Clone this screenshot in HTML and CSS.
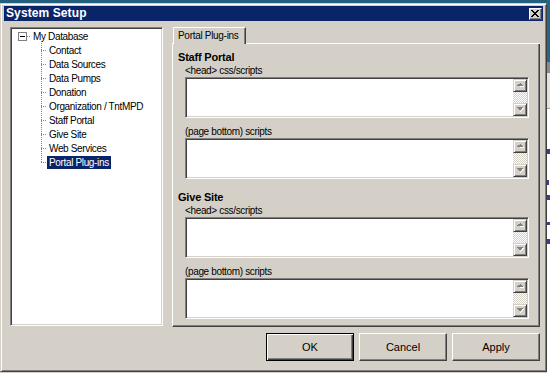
FILE: index.html
```html
<!DOCTYPE html>
<html>
<head>
<meta charset="utf-8">
<title>System Setup</title>
<link rel="stylesheet" href="styles.css">
</head>
<body>
<div class="bgtop"></div>
<div class="side">
  <div class="s-teal"></div>
  <div class="s-gray"></div>
  <div class="s-light"></div>
  <div class="s-white">
    <i class="lnk l1"></i><i class="lnk l2"></i><i class="lnk l3"></i><i class="lnk l4"></i><i class="lnk l5"></i>
  </div>
</div>
<div class="dialog">
  <div class="titlebar">
    <span class="title">System Setup</span>
    <span class="close"><svg width="8" height="7" viewBox="0 0 8 7" shape-rendering="crispEdges"><path d="M0 0h2v1h-2zM6 0h2v1h-2zM1 1h2v1h-2zM5 1h2v1h-2zM2 2h4v1h-4zM3 3h2v1h-2zM2 4h4v1h-4zM1 5h2v1h-2zM5 5h2v1h-2zM0 6h2v1h-2zM6 6h2v1h-2z" fill="#000"/></svg></span>
  </div>
  <div class="main">
    <div class="tree">
      <div class="row root"><span class="box"><i></i></span><span class="hl"></span><span class="lbl">My Database</span></div>
      <div class="row child"><span class="conn"></span><span class="lbl">Contact</span></div>
      <div class="row child"><span class="conn"></span><span class="lbl">Data Sources</span></div>
      <div class="row child"><span class="conn"></span><span class="lbl">Data Pumps</span></div>
      <div class="row child"><span class="conn"></span><span class="lbl">Donation</span></div>
      <div class="row child"><span class="conn"></span><span class="lbl">Organization / TntMPD</span></div>
      <div class="row child"><span class="conn"></span><span class="lbl">Staff Portal</span></div>
      <div class="row child"><span class="conn"></span><span class="lbl">Give Site</span></div>
      <div class="row child"><span class="conn"></span><span class="lbl">Web Services</span></div>
      <div class="row child last"><span class="conn"></span><span class="lbl sel">Portal Plug-ins</span></div>
    </div>
    <div class="tabs">
      <div class="tabstrip">
        <span class="edge"></span>
        <span class="tab">Portal Plug-ins</span>
        <span class="fill"></span>
      </div>
      <div class="panel">
        <div class="group">
          <div class="gtitle">Staff Portal</div>
          <div class="label">&lt;head&gt; css/scripts</div>
          <div class="memo"><div class="sb"><span class="sbbtn"><svg width="7" height="5" viewBox="0 0 7 5" shape-rendering="crispEdges"><path d="M4 1h1v1h1v1h1v1h-4z" fill="#fff"/><path d="M3 0h1v1h1v1h1v1h-6v-1h1v-1h2z" fill="#808080"/></svg></span><span class="track"></span><span class="sbbtn"><svg width="7" height="5" viewBox="0 0 7 5" shape-rendering="crispEdges"><path d="M1 1h6v1h-1v1h-1v1h-1v1h-1v-1h1v-1h1v-1h1z" fill="#fff"/><path d="M0 0h6v1h-1v1h-1v1h-2v-1h-1v-1h-1z" fill="#808080"/></svg></span></div></div>
          <div class="label gap">(page bottom) scripts</div>
          <div class="memo"><div class="sb"><span class="sbbtn"><svg width="7" height="5" viewBox="0 0 7 5" shape-rendering="crispEdges"><path d="M4 1h1v1h1v1h1v1h-4z" fill="#fff"/><path d="M3 0h1v1h1v1h1v1h-6v-1h1v-1h2z" fill="#808080"/></svg></span><span class="track"></span><span class="sbbtn"><svg width="7" height="5" viewBox="0 0 7 5" shape-rendering="crispEdges"><path d="M1 1h6v1h-1v1h-1v1h-1v1h-1v-1h1v-1h1v-1h1z" fill="#fff"/><path d="M0 0h6v1h-1v1h-1v1h-2v-1h-1v-1h-1z" fill="#808080"/></svg></span></div></div>
        </div>
        <div class="group second">
          <div class="gtitle">Give Site</div>
          <div class="label">&lt;head&gt; css/scripts</div>
          <div class="memo"><div class="sb"><span class="sbbtn"><svg width="7" height="5" viewBox="0 0 7 5" shape-rendering="crispEdges"><path d="M4 1h1v1h1v1h1v1h-4z" fill="#fff"/><path d="M3 0h1v1h1v1h1v1h-6v-1h1v-1h2z" fill="#808080"/></svg></span><span class="track"></span><span class="sbbtn"><svg width="7" height="5" viewBox="0 0 7 5" shape-rendering="crispEdges"><path d="M1 1h6v1h-1v1h-1v1h-1v1h-1v-1h1v-1h1v-1h1z" fill="#fff"/><path d="M0 0h6v1h-1v1h-1v1h-2v-1h-1v-1h-1z" fill="#808080"/></svg></span></div></div>
          <div class="label gap">(page bottom) scripts</div>
          <div class="memo"><div class="sb"><span class="sbbtn"><svg width="7" height="5" viewBox="0 0 7 5" shape-rendering="crispEdges"><path d="M4 1h1v1h1v1h1v1h-4z" fill="#fff"/><path d="M3 0h1v1h1v1h1v1h-6v-1h1v-1h2z" fill="#808080"/></svg></span><span class="track"></span><span class="sbbtn"><svg width="7" height="5" viewBox="0 0 7 5" shape-rendering="crispEdges"><path d="M1 1h6v1h-1v1h-1v1h-1v1h-1v-1h1v-1h1v-1h1z" fill="#fff"/><path d="M0 0h6v1h-1v1h-1v1h-2v-1h-1v-1h-1z" fill="#808080"/></svg></span></div></div>
        </div>
      </div>
    </div>
  </div>
  <div class="buttons">
    <span class="btn default">OK</span>
    <span class="btn">Cancel</span>
    <span class="btn">Apply</span>
  </div>
</div>
</body>
</html>
```
FILE: styles.css
```css
* { box-sizing: border-box; }
html, body { margin: 0; padding: 0; }
body {
  width: 550px;
  height: 373px;
  overflow: hidden;
  display: grid;
  grid-template-columns: 547px 3px;
  grid-template-rows: 3px 369px 1px;
  background: #d4d0c8;
  font-family: "Liberation Sans", Arial, sans-serif;
  font-size: 10px;
  color: #000;
}
.bgtop { grid-column: 1; grid-row: 1; background: #24607e; }
.side { grid-column: 2; grid-row: 1 / 4; display: flex; flex-direction: column; }
.s-teal { height: 62px; background: #2a6584; }
.s-gray { height: 11px; background: #8a8a8a; }
.s-light { height: 36px; background: #e4e2de; border-bottom: 1px solid #a0a0a0; }
.s-white { flex: 1; background: #fff; display: flex; flex-direction: column; }
.lnk { display: block; height: 5px; width: 3px; background: #3b3b9a; }
.l1 { margin-top: 40px; }
.l2 { margin-top: 26px; width: 2px; }
.l3 { margin-top: 10px; }
.l4 { margin-top: 22px; height: 3px; }
.l5 { margin-top: 14px; }

.dialog {
  grid-column: 1;
  grid-row: 2;
  display: flex;
  flex-direction: column;
  background: #d4d0c8;
  border: 1px solid;
  border-color: #d4d0c8 #404040 #404040 #d4d0c8;
  box-shadow: inset 1px 1px #fff, inset -1px -1px #808080;
  padding: 2px 3px 3px 3px;
}
.titlebar {
  height: 15px;
  background: #0a246a;
  display: flex;
  align-items: center;
  justify-content: space-between;
  padding-left: 2px;
  padding-right: 1px;
}
.title {
  color: #fff;
  font-weight: bold;
  font-size: 12px;
  line-height: 15px;
  letter-spacing: 0.1px;
}
.close {
  width: 13px;
  height: 12px;
  background: #d4d0c8;
  border: 1px solid;
  border-color: #fff #404040 #404040 #fff;
  box-shadow: inset -1px -1px #808080;
  display: flex;
  align-items: center;
  justify-content: center;
}
.close svg { display: block; margin-left: -1px; }

.main {
  display: flex;
  gap: 9px;
  margin-top: 6px;
  padding-left: 6px;
  padding-right: 3px;
}
.tree {
  width: 153px;
  height: 299px;
  background: #fff;
  border: 1px solid;
  border-color: #808080 #fff #fff #808080;
  box-shadow: inset 1px 1px #404040, inset -1px -1px #d4d0c8;
  padding: 1px;
  letter-spacing: -0.35px;
}
.row {
  height: 14px;
  display: flex;
  align-items: center;
  line-height: 13px;
}
.box {
  margin-left: 6px;
  width: 9px;
  height: 9px;
  border: 1px solid #808080;
  display: flex;
  align-items: center;
  justify-content: center;
}
.box i { display: block; width: 5px; height: 1px; background: #000; }
.hl {
  width: 4px;
  height: 1px;
  background: linear-gradient(to right, #808080 50%, transparent 50%) 0 0 / 2px 1px repeat-x;
}
.root .lbl { margin-left: 1px; padding: 0 1px; }
.conn {
  margin-left: 29px;
  width: 6px;
  height: 14px;
  background:
    linear-gradient(#808080 50%, transparent 50%) 0 0 / 1px 2px repeat-y,
    linear-gradient(to right, #808080 50%, transparent 50%) 2px 7px / 2px 1px repeat-x;
}
.last .conn {
  background:
    linear-gradient(#fff, #fff) 0 8px / 1px 6px no-repeat,
    linear-gradient(#808080 50%, transparent 50%) 0 0 / 1px 2px repeat-y,
    linear-gradient(to right, #808080 50%, transparent 50%) 2px 7px / 2px 1px repeat-x;
}
.child .lbl { padding: 0 2px; }
.lbl.sel { background: #0a246a; color: #fff; }

.tabs { width: 368px; display: flex; flex-direction: column; }
.tabstrip { height: 17px; display: flex; align-items: stretch; }
.edge { width: 1px; border-bottom: 1px solid #fff; }
.tab {
  width: 73px;
  border-top: 1px solid #fff;
  border-left: 1px solid #fff;
  border-right: 1px solid #404040;
  box-shadow: inset -1px 0 #808080;
  padding-left: 4px;
  line-height: 15px;
  letter-spacing: -0.3px;
}
.fill { flex: 1; border-bottom: 1px solid #fff; }
.panel {
  height: 283px;
  border-left: 1px solid #fff;
  border-right: 1px solid #404040;
  border-bottom: 1px solid #404040;
  box-shadow: inset -1px -1px #808080;
  padding: 7px 0 0 5px;
}
.group { display: flex; flex-direction: column; }
.group.second { margin-top: 12px; }
.gtitle {
  font-weight: bold;
  font-size: 11px;
  line-height: 13px;
  letter-spacing: -0.2px;
}
.label {
  margin-left: 7px;
  line-height: 13px;
  letter-spacing: -0.35px;
}
.label.gap { margin-top: 7px; }
.memo {
  margin-left: 7px;
  width: 344px;
  height: 41px;
  background: #fff;
  border: 1px solid;
  border-color: #808080 #fff #fff #808080;
  box-shadow: inset 1px 1px #404040, inset -1px -1px #d4d0c8;
  padding: 1px;
  display: flex;
  justify-content: flex-end;
}
.sb { width: 14px; display: flex; flex-direction: column; }
.sbbtn {
  height: 13px;
  background: #d4d0c8;
  border: 1px solid;
  border-color: #d4d0c8 #404040 #404040 #d4d0c8;
  box-shadow: inset 1px 1px #fff, inset -1px -1px #808080;
  display: flex;
  align-items: center;
  justify-content: center;
}
.sbbtn svg { display: block; }
.track {
  flex: 1;
  background: repeating-conic-gradient(#fff 0 25%, #d4d0c8 0 50%) 0 0 / 2px 2px;
}

.buttons {
  display: flex;
  justify-content: flex-end;
  gap: 5px;
  margin-top: 6px;
  padding-right: 3px;
}
.btn {
  width: 88px;
  height: 28px;
  display: flex;
  align-items: center;
  justify-content: center;
  font-size: 11px;
  background: #d4d0c8;
  border: 1px solid;
  border-color: #fff #404040 #404040 #fff;
  box-shadow: inset -1px -1px #808080;
}
.btn.default {
  border-color: #000;
  box-shadow: inset 1px 1px #fff, inset -1px -1px #404040, inset -2px -2px #808080;
}
```
